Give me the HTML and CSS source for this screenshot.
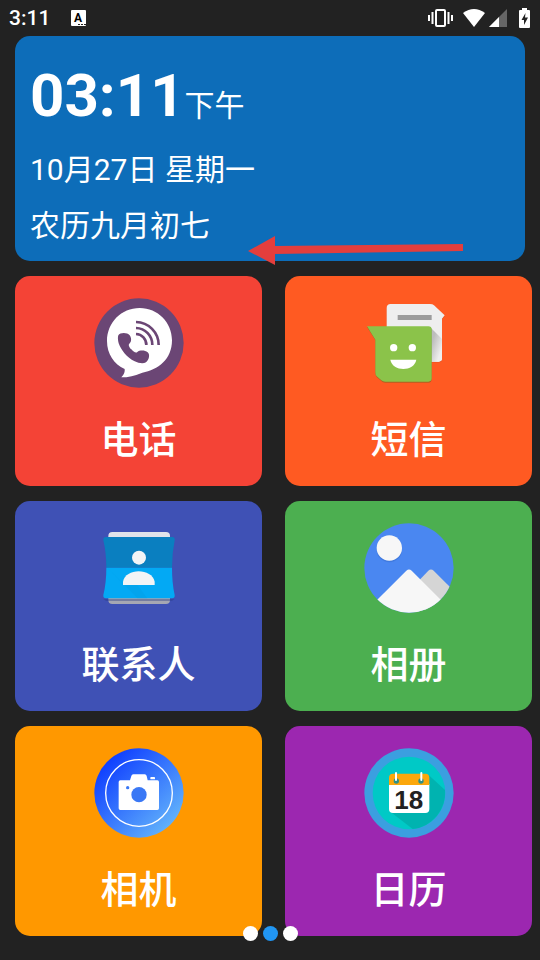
FILE: index.html
```
<!DOCTYPE html>
<html lang="zh-CN">

<head>
    <meta charset="UTF-8">
    <meta name="viewport" content="width=device-width, initial-scale=1.0">
    <title>桌面</title>
    <link rel="stylesheet" href="styles.css">
</head>

<body>
    <header class="status">
        <span class="status-time">3:11</span>
        <svg class="status-app" viewBox="0 0 16 16" width="16" height="16">
            <rect width="15" height="16" rx="1" fill="#fff" />
            <text x="7" y="12" text-anchor="middle">A</text>
            <path d="M7 14.500h8" stroke="#222" stroke-dasharray="2 1" />
        </svg>
        <div class="status-icons">
            <svg class="vibrate" viewBox="0 0 25 20" width="25" height="20">
                <rect x="8" y="2" width="9" height="16" rx="1" fill="none" stroke="#fff" stroke-width="2" />
                <path d="M4.500 4v12M1 7v6M20.500 4v12M24 7v6" stroke="#fff" stroke-width="2" />
            </svg>
            <svg class="wifi" viewBox="0 0 22 20" width="22" height="20">
                <path d="M0 5Q11-3 22 5L11 19z" fill="#fff" />
            </svg>
            <svg class="signal" viewBox="0 0 18 20" width="18" height="20">
                <path d="M18 1v18H0z" fill="#666" />
                <path d="M10 9v10H0z" fill="#fff" />
            </svg>
            <svg class="battery" viewBox="0 0 11 20" width="11" height="20">
                <path d="M3 0h5v2h2q1 0 1 1v16q0 1-1 1H1q-1 0-1-1V3q0-1 1-1h2z" fill="#fff" />
                <path d="M6.500 5L2.500 12H5v5l4-7.500H6z" fill="#222" />
            </svg>
        </div>
    </header>

    <main class="home">
        <section class="clock">
            <p class="clock-time"><b>03:11</b>下午</p>
            <p class="clock-line">10月27日 星期一</p>
            <p class="clock-line">农历九月初七</p>
            <svg class="arrow" viewBox="0 0 216 30" width="216" height="30">
                <path d="M0 16L27 1v10L215 9v7L27 19v11z" fill="#e33e3d" />
            </svg>
        </section>

        <div class="tiles">
            <button class="tile red" type="button">
                <svg class="tile-icon" viewBox="0 0 270 270">
                    <circle cx="135" cy="135" r="134" fill="#6b4675" />
                    <path d="M137 30C192 30 234 74 234 127C234 184 192 216 145 224Q112 238 82 238Q94 226 92 213C60 199 39 168 39 129C39 74 82 30 137 30z" fill="#fff" />
                    <path d="M73 112C78 103 100 103 107 112C113 120 113 132 106 137C102 141 106 148 112 154C118 161 126 167 130 162C137 156 153 156 161 163C169 170 165 186 156 193C148 198 134 196 122 190C98 178 82 158 74 136Q70 120 73 112z" fill="#6b4675" />
                    <path d="M126 72A69 69 0 0 1 194 141M126 90A50 50 0 0 1 175 141M126 108A32 32 0 0 1 157 141" fill="none" stroke="#6b4675" stroke-width="8" />
                </svg>
                <span class="tile-label">电话</span>
            </button>

            <button class="tile orange" type="button">
                <svg class="tile-icon" viewBox="0 0 270 270">
                    <defs>
                        <linearGradient id="fold" x1="0" y1="0" x2="1" y2="1">
                            <stop offset="0.300" stop-color="#bdbdbd" />
                            <stop offset="0.800" stop-color="#eee" />
                        </linearGradient>
                    </defs>
                    <path d="M80 20H198Q206 20 210 24L242 54L234 64V183Q234 193 224 193H78Q68 193 68 183V32Q68 20 80 20z" fill="#c7431a" opacity="0.600" />
                    <path d="M80 18H198Q206 18 210 22L242 52L234 62V181Q234 191 224 191H78Q68 191 68 181V30Q68 18 80 18z" fill="#eee" />
                    <path d="M198 87L234 123V181Q234 191 224 191H200z" fill="url(#fold)" />
                    <path d="M101 51h102v15H101z" fill="#9c9c9c" />
                    <path d="M9 87H193Q203 87 203 97V243Q203 254 193 254H64Q56 254 52 249L38 237Q34 233 34 225V127z" fill="#5b6a20" opacity="0.500" />
                    <path d="M9 85H193Q203 85 203 95V241Q203 251 193 251H64Q56 251 52 247L38 235Q34 231 34 223V125z" fill="#8bc34a" />
                    <circle cx="89" cy="149" r="11" fill="#fff" />
                    <circle cx="145" cy="149" r="11" fill="#fff" />
                    <path d="M79 185H157C150 222 86 222 79 185z" fill="#fff" />
                </svg>
                <span class="tile-label">短信</span>
            </button>

            <button class="tile indigo" type="button">
                <svg class="tile-icon" viewBox="0 0 270 270">
                    <path d="M43 60V39Q43 27 55 27H216Q228 27 228 39V60z" fill="#e0e3ea" />
                    <path d="M43 210V231Q43 243 55 243H216Q228 243 228 231V210z" fill="#a5a7b3" />
                    <path d="M28 228H242L234 234H36z" fill="#2a3b85" opacity="0.400" />
                    <path d="M36 42H234Q243 42 242 52Q234 90 234 134H37Q37 90 28 52Q27 42 36 42z" fill="#0a7fc0" />
                    <path d="M37 134H234Q234 180 242 216Q243 226 234 226H36Q27 226 28 216Q37 180 37 134z" fill="#03a9f4" />
                    <path d="M40 134L87 181V186H130L160 226H130z" fill="#0298de" opacity="0.300" />
                    <circle cx="135" cy="104" r="21" fill="#f2f4f6" />
                    <path d="M87 186V176C94 134 174 134 182 176V186z" fill="#f2f4f6" />
                </svg>
                <span class="tile-label">联系人</span>
            </button>

            <button class="tile green" type="button">
                <svg class="tile-icon" viewBox="0 0 270 270">
                    <defs>
                        <clipPath id="round">
                            <circle cx="135" cy="135" r="134" />
                        </clipPath>
                    </defs>
                    <g clip-path="url(#round)">
                        <path d="M0 0h270v270H0z" fill="#4a87f1" />
                        <circle cx="76" cy="80" r="38" fill="#3a72d4" opacity="0.600" />
                        <circle cx="76" cy="75" r="38" fill="#f7f7f7" />
                        <path d="M160 178L193 143Q201 136 209 143L270 204V270H160z" fill="#d5d5d5" />
                        <path d="M0 270L127 143Q135 136 143 143L270 270z" fill="#f7f7f7" />
                    </g>
                </svg>
                <span class="tile-label">相册</span>
            </button>

            <button class="tile amber" type="button">
                <svg class="tile-icon" viewBox="0 0 270 270">
                    <defs>
                        <linearGradient id="lens" x1="0" y1="0" x2="1" y2="1">
                            <stop offset="0.100" stop-color="#0a38ff" />
                            <stop offset="0.900" stop-color="#66b8fb" />
                        </linearGradient>
                    </defs>
                    <circle cx="135" cy="135" r="134" fill="url(#lens)" />
                    <circle cx="135" cy="135" r="100" fill="none" stroke="#fff" stroke-width="4" />
                    <path d="M79 97H108L112 84Q113 79 118 79H152Q157 79 158 84L161 97H190Q195 97 195 102V181Q195 186 190 186H79Q74 186 74 181V102Q74 97 79 97z" fill="#fff" />
                    <rect x="169" y="87" width="14" height="7" rx="2" fill="#fff" />
                    <circle cx="101" cy="119" r="5" fill="#3a78f5" />
                    <circle cx="135" cy="140" r="23" fill="#3a78f5" />
                </svg>
                <span class="tile-label">相机</span>
            </button>

            <button class="tile purple" type="button">
                <svg class="tile-icon" viewBox="0 0 270 270">
                    <circle cx="135" cy="135" r="134" fill="#3b9fe0" />
                    <circle cx="135" cy="135" r="109" fill="#00c9c6" />
                    <path d="M193 80L243 126A109 109 0 0 1 146 243L80 192z" fill="#00b3b0" />
                    <path d="M75 108H196V183Q196 195 184 195H87Q75 195 75 183z" fill="#fff" />
                    <path d="M75 111V89Q75 77 87 77H184Q196 77 196 89V111z" fill="#fba70b" />
                    <circle cx="97" cy="99" r="8" fill="#2e8f86" />
                    <circle cx="171" cy="99" r="8" fill="#2e8f86" />
                    <path d="M96 75V96M172 75V96" stroke="#fff" stroke-width="6" stroke-linecap="round" />
                    <text class="day" x="134" y="182" text-anchor="middle">18</text>
                </svg>
                <span class="tile-label">日历</span>
            </button>
        </div>

        <nav class="pager">
            <button class="dot" type="button"></button>
            <button class="dot active" type="button"></button>
            <button class="dot" type="button"></button>
        </nav>
    </main>
</body>

</html>
```

FILE: styles.css
```
* {
    margin: 0;
    padding: 0;
    box-sizing: border-box;
}

body {
    background-color: #222;
    color: #fff;
    font-family: Roboto, "Noto Sans CJK SC", sans-serif;
}

button {
    border: none;
    color: inherit;
    font-family: inherit;
    cursor: pointer;
}

svg {
    display: block;
}

/* status bar */
.status {
    display: flex;
    align-items: center;
    height: 36px;
    padding: 0 10px 0 9px;
}

.status-time {
    font-size: 21px;
    font-weight: 500;
}

.status-app {
    margin-left: 21px;
    font: bold 12px Roboto, sans-serif;
}

.status-icons {
    display: flex;
    align-items: center;
    margin-left: auto;
}

.wifi {
    margin-left: 10px;
}

.signal {
    margin-left: 4px;
}

.battery {
    margin-left: 12px;
}

/* home */
.home {
    position: relative;
    padding: 0 8px 24px 15px;
}

.clock {
    position: relative;
    margin: 0 7px 15px 0;
    padding: 24px 15px 7px;
    border-radius: 15px;
    background-color: #0d6db9;
}

.clock-time {
    height: 72px;
    margin-bottom: 10px;
    font-size: 30px;
    line-height: 72px;
}

.clock-time b {
    font-size: 60px;
}

.clock-line {
    font-size: 30px;
    line-height: 56px;
}

.arrow {
    position: absolute;
    right: 61px;
    bottom: -4px;
}

.tiles {
    display: grid;
    grid-template-columns: 1fr 1fr;
    gap: 15px 23px;
}

.tile {
    display: flex;
    flex-direction: column;
    align-items: center;
    padding: 22px 0 18px;
    border-radius: 15px;
}

.tile-icon {
    width: 90px;
    height: 90px;
}

.tile-label {
    margin-top: 24px;
    font-size: 38px;
    font-weight: 500;
    line-height: 56px;
}

.day {
    font: bold 78px "Liberation Sans", sans-serif;
    fill: #222;
}

.red {
    background-color: #f44336;
}

.orange {
    background-color: #ff5a22;
}

.indigo {
    background-color: #3f51b5;
}

.green {
    background-color: #4caf50;
}

.amber {
    background-color: #ff9800;
}

.purple {
    background-color: #9c27b0;
}

.pager {
    position: absolute;
    left: 0;
    right: 0;
    bottom: 19px;
    display: flex;
    justify-content: center;
    gap: 5px;
}

.dot {
    width: 15px;
    height: 15px;
    border-radius: 50%;
    background-color: #fff;
}

.active {
    background-color: #2196f3;
}
```
